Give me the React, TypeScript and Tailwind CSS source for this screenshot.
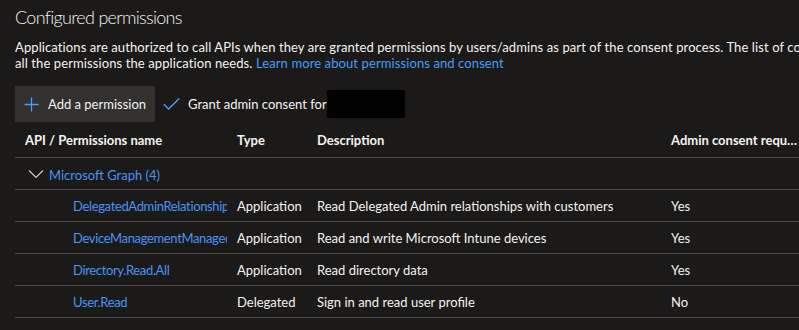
import React from 'react';

const FONT = "font-['Lato','Open_Sans',sans-serif]";

const rows = [
  { name: 'DelegatedAdminRelationship.Read.All', type: 'Application', desc: 'Read Delegated Admin relationships with customers', admin: 'Yes' },
  { name: 'DeviceManagementManagedDevices.ReadWrite.All', type: 'Application', desc: 'Read and write Microsoft Intune devices', admin: 'Yes' },
  { name: 'Directory.Read.All', type: 'Application', desc: 'Read directory data', admin: 'Yes' },
  { name: 'User.Read', type: 'Delegated', desc: 'Sign in and read user profile', admin: 'No' },
];

const PlusIcon = () => (
  <svg width="15" height="15" viewBox="0 0 15 15" fill="none">
    <path d="M7.5 0.5V14.5M0.5 7.5H14.5" stroke="#479ef5" strokeWidth="1.3" />
  </svg>
);

const CheckIcon = () => (
  <svg width="17" height="12" viewBox="0 0 17 12" fill="none">
    <path d="M0.8 6.2L5.6 11L16.2 0.6" stroke="#479ef5" strokeWidth="1.4" />
  </svg>
);

const ChevronDown = () => (
  <svg width="16" height="10" viewBox="0 0 16 10" fill="none">
    <path d="M1 1.5L8 8.5L15 1.5" stroke="#d2d0ce" strokeWidth="1.1" />
  </svg>
);

export default function App() {
  return (
    <div className={`w-[799px] h-[330px] overflow-hidden bg-[#1b1a19] text-[#f3f2f1] ${FONT}`}>
      <div className="pl-[15px] pt-[5px]">
        <h2 className="text-[18px] leading-6 font-light tracking-[-0.7px]">Configured permissions</h2>

        <div className="mt-[10px] text-[13px] leading-4 whitespace-nowrap tracking-[0.1px]">
          <p>
            Applications are authorized to call APIs when they are granted permissions by users/admins as part of the consent process. The list of configured permissions should include
          </p>
          <p>
            all the permissions the application needs.{' '}
            <a className="text-[#479ef5]">Learn more about permissions and consent</a>
          </p>
        </div>

        {/* toolbar */}
        <div className="mt-[15px] flex items-center text-[13px] h-9">
          <button className="h-9 flex items-center gap-[9px] pl-[9px] pr-[9px] bg-[#323130]">
            <PlusIcon />
            <span className="pt-[2px]">Add a permission</span>
          </button>
          <div className="flex items-center ml-2 gap-2">
            <CheckIcon />
            <span className="pt-[2px]">Grant admin consent for</span>
          </div>
          <div className="w-[78px] h-7 bg-black" />
        </div>

        {/* table */}
        <div className="w-[784px] text-[13px]">
          <div className="grid grid-cols-[212px_80px_354px_138px] h-9 items-center pt-[3px] border-b border-[#484644] font-bold">
            <div className="pl-[10px]">API / Permissions name</div>
            <div className="pl-[10px]">Type</div>
            <div className="pl-[10px]">Description</div>
            <div className="pl-[10px] truncate">Admin consent required</div>
          </div>

          <div className="h-8 flex items-center border-b border-[#484644] pl-[13px] gap-[5px]">
            <ChevronDown />
            <a className="text-[#4a93f5] pt-[5px]">Microsoft Graph (4)</a>
          </div>

          {rows.map((r) => (
            <div key={r.name} className="grid grid-cols-[212px_80px_354px_138px] h-8 items-center pt-[2px] border-b border-[#484644]">
              <div className="pl-[58px] overflow-hidden whitespace-nowrap text-[#4a93f5] tracking-[-0.35px]">{r.name}</div>
              <div className="pl-[10px]">{r.type}</div>
              <div className="pl-[10px]">{r.desc}</div>
              <div className="pl-[10px]">{r.admin}</div>
            </div>
          ))}
        </div>
      </div>
    </div>
  );
}
